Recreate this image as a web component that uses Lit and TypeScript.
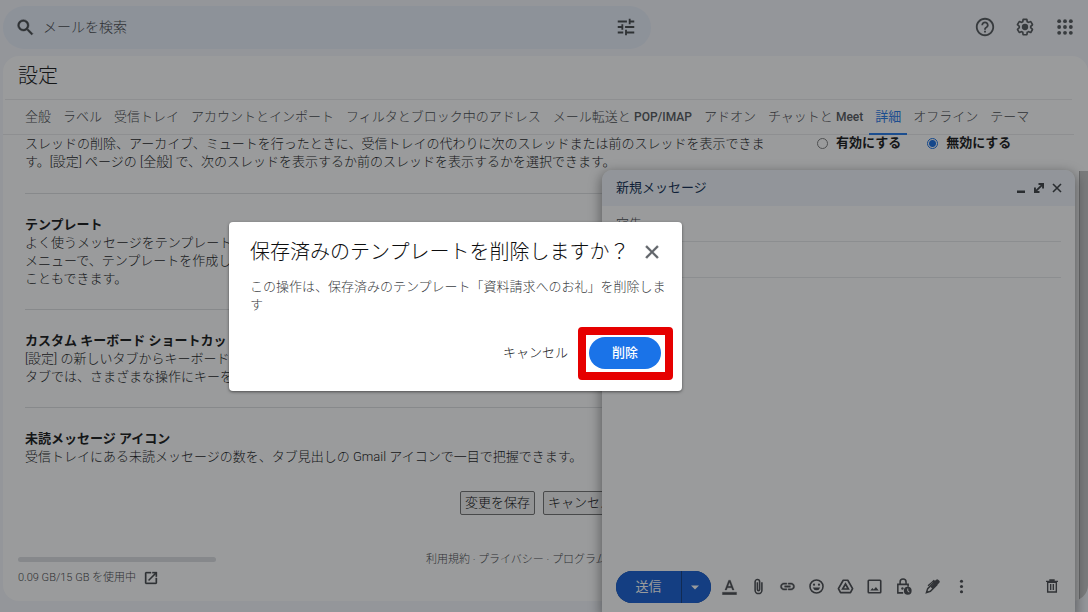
import { LitElement, html, css, svg } from "lit";
import { customElement, property } from "lit/decorators.js";
import { classMap } from "lit/directives/class-map.js";

const icons: Record<string, unknown> = {
  search: svg`<path d="M15.5 14h-.79l-.28-.27A6.471 6.471 0 0 0 16 9.5 6.5 6.5 0 1 0 9.5 16c1.61 0 3.09-.59 4.23-1.57l.27.28v.79l5 4.99L20.49 19l-4.99-5zm-6 0C7.01 14 5 11.99 5 9.5S7.01 5 9.5 5 14 7.01 14 9.5 11.99 14 9.5 14z" stroke="currentColor" stroke-width=".5"/>`,
  tune: svg`<path d="M3 17v2h6v-2H3zM3 5v2h10V5H3zm10 16v-2h8v-2h-8v-2h-2v6h2zM7 9v2H3v2h4v2h2V9H7zm14 4v-2H11v2h10zm-6-4h2V7h4V5h-4V3h-2v6z"/>`,
  help: svg`<path d="M11 18h2v-2h-2v2zm1-16C6.48 2 2 6.48 2 12s4.48 10 10 10 10-4.48 10-10S17.52 2 12 2zm0 18c-4.41 0-8-3.59-8-8s3.59-8 8-8 8 3.59 8 8-3.59 8-8 8zm0-14c-2.21 0-4 1.79-4 4h2c0-1.1.9-2 2-2s2 .9 2 2c0 2-3 1.75-3 5h2c0-2.25 3-2.5 3-5 0-2.21-1.79-4-4-4z"/>`,
  gear: svg`<path d="M13.85 22.25h-3.7c-.74 0-1.36-.54-1.45-1.27l-.27-1.89c-.27-.14-.53-.29-.79-.46l-1.8.72c-.7.26-1.47-.03-1.81-.65L2.2 15.53c-.35-.66-.2-1.44.36-1.88l1.53-1.19c-.01-.15-.02-.3-.02-.46 0-.15.01-.31.02-.46l-1.52-1.19c-.59-.45-.74-1.26-.37-1.88l1.85-3.19c.34-.62 1.11-.9 1.79-.63l1.81.73c.26-.17.52-.32.78-.46l.27-1.91c.09-.7.71-1.25 1.44-1.25h3.7c.74 0 1.36.54 1.45 1.27l.27 1.89c.27.14.53.29.79.46l1.8-.72c.71-.26 1.48.03 1.82.65l1.84 3.18c.36.66.2 1.44-.36 1.88l-1.52 1.19c.01.15.02.3.02.46s-.01.31-.02.46l1.52 1.19c.56.45.72 1.23.37 1.86l-1.86 3.22c-.34.62-1.11.9-1.8.63l-1.8-.72c-.26.17-.52.32-.78.46l-.27 1.91c-.1.68-.72 1.22-1.46 1.22zm-3.23-2h2.76l.37-2.55.53-.22c.44-.18.88-.44 1.34-.78l.45-.34 2.38.96 1.38-2.4-2.03-1.58.07-.56c.03-.26.06-.51.06-.78s-.03-.53-.06-.78l-.07-.56 2.03-1.58-1.39-2.4-2.39.96-.45-.35c-.42-.32-.87-.58-1.33-.77l-.52-.22-.37-2.55h-2.76l-.37 2.55-.53.21c-.44.19-.88.44-1.34.79l-.45.33-2.38-.95-1.39 2.39 2.03 1.58-.07.56a7 7 0 0 0-.06.79c0 .26.02.53.06.78l.07.56-2.03 1.58 1.38 2.4 2.39-.96.45.35c.43.33.86.58 1.33.77l.53.22.38 2.55z"/><circle cx="12" cy="12" r="3.8"/>`,
  apps: svg`${[5, 12, 19].map((y) => [5, 12, 19].map((x) => svg`<circle cx=${x} cy=${y} r="2.3"/>`))}`,
  minimize: svg`<path d="M4 17h16v5H4z"/>`,
  expand: svg`<path d="M11 2h11v11h-3.8V8.5L8.5 18.2H13V22H2V11h3.8v4.5L15.5 5.8H11z"/>`,
  close: svg`<path d="M19 6.41 17.59 5 12 10.59 6.41 5 5 6.41 10.59 12 5 17.59 6.41 19 12 13.41 17.59 19 19 17.59 13.41 12z" stroke="currentColor" stroke-width=".6"/>`,
  closeBold: svg`<path d="M4 4l16 16M20 4 4 20" fill="none" stroke="currentColor" stroke-width="3.2"/>`,
  open: svg`<path d="M19 19H5V5h7V3H5a2 2 0 0 0-2 2v14a2 2 0 0 0 2 2h14c1.1 0 2-.9 2-2v-7h-2v7zM14 3v2h3.59l-9.83 9.83 1.41 1.41L19 6.41V10h2V3h-7z" stroke="currentColor" stroke-width=".5"/>`,
  format: svg`<path d="M2 20h20v3.6H2zM5.5 17h2.4l1.2-3.2h5.8l1.2 3.2h2.4L13.2 3h-2.4L5.5 17zm4.4-5.2L12 6.1l2.1 5.7H9.9z" stroke="currentColor" stroke-width=".4"/>`,
  clip: svg`<path d="M16.8 6v11.2a4.8 4.8 0 0 1-9.6 0V5.4a3.2 3.2 0 0 1 6.4 0v10.8a1.6 1.6 0 0 1-3.2 0V6" fill="none" stroke="currentColor" stroke-width="2.2"/>`,
  link: svg`<path d="M3.9 12c0-1.71 1.39-3.1 3.1-3.1h4V7H7c-2.76 0-5 2.24-5 5s2.24 5 5 5h4v-1.9H7c-1.71 0-3.1-1.39-3.1-3.1zM8 13h8v-2H8v2zm9-6h-4v1.9h4c1.71 0 3.1 1.39 3.1 3.1s-1.39 3.1-3.1 3.1h-4V17h4c2.76 0 5-2.24 5-5s-2.24-5-5-5z" stroke="currentColor" stroke-width=".6"/>`,
  emoji: svg`<circle cx="12" cy="12" r="9.2" fill="none" stroke="currentColor" stroke-width="2.2"/><circle cx="8.5" cy="9.5" r="1.6"/><circle cx="15.5" cy="9.5" r="1.6"/><path d="M6.7 13.5h10.6a5.6 5.6 0 0 1-10.6 0z"/>`,
  drive: svg`<path d="M8.8 3.2h6.4L22 15l-3 5.6H5L2 15z" fill="none" stroke="currentColor" stroke-width="2.4" stroke-linejoin="round"/><path d="M12 8.5 16 15.5H8z" fill="none" stroke="currentColor" stroke-width="2.4"/>`,
  image: svg`<rect x="3.2" y="3.2" width="17.6" height="17.6" rx="1" fill="none" stroke="currentColor" stroke-width="2.3"/><path d="M6 17.8l3-3.6 2 2.2 3-3.6 4 5z"/>`,
  lock: svg`<path d="M11.5 21H4V9h14.5v3.5M7.2 9V5.7a4.2 4.2 0 0 1 8.4 0V9" fill="none" stroke="currentColor" stroke-width="2.2"/><circle cx="10.5" cy="14.8" r="1.7"/><path d="M18 12.5a5.5 5.5 0 1 0 0 11 5.5 5.5 0 0 0 0-11zm-.7 2.4h1.4v2.8l2 1.9-1 1-2.4-2.3z" fill-rule="evenodd"/>`,
  pen: svg`<path d="M3.5 20.5 5.2 15 14 6.2l3.8 3.8L9 18.8z" fill="none" stroke="currentColor" stroke-width="2.1"/><path d="M10.5 5.8 13.7 2.6l1.8 1.4L17.2 2.3a2 2 0 0 1 2.8 0L21.7 4a2 2 0 0 1 0 2.8L12.6 16 9 12.4 14 7.6 12.3 6 6.5 11.8 5 10.3z"/>`,
  more: svg`<circle cx="12" cy="4.5" r="2.2"/><circle cx="12" cy="12" r="2.2"/><circle cx="12" cy="19.5" r="2.2"/>`,
  trash: svg`<path d="M5.5 6.5h13V21h-13zM3 5h18M9 5V3h6v2M10 9v9M14 9v9" fill="none" stroke="currentColor" stroke-width="2.1"/>`,
  caret: svg`<path d="M4 9h16l-8 8z"/>`,
};

@customElement("mail-icon")
class MailIcon extends LitElement {
  @property() name = "";
  @property({ type: Number }) size = 18;

  static styles = css`
    :host {
      display: inline-flex;
      flex: none;
    }
    .glyph {
      display: block;
      fill: currentColor;
    }
  `;

  render() {
    return html`<svg class="glyph" width=${this.size} height=${this.size} viewBox="0 0 24 24" aria-hidden="true">
      ${icons[this.name]}
    </svg>`;
  }
}

@customElement("app-root")
class AppRoot extends LitElement {
  private tabs = [
    ["全般"],
    ["ラベル"],
    ["受信トレイ"],
    ["アカウントとインポート"],
    ["フィルタとブロック中のアドレス"],
    ["メール転送と ", "POP/IMAP"],
    ["アドオン"],
    ["チャットと ", "Meet"],
    ["詳細"],
    ["オフライン"],
    ["テーマ"],
  ];

  private tools = [
    ["format", "書式設定オプション"],
    ["clip", "ファイルを添付"],
    ["link", "リンクを挿入"],
    ["emoji", "絵文字を挿入"],
    ["drive", "ドライブを使用してファイルを挿入"],
    ["image", "写真を挿入"],
    ["lock", "情報保護モードを切り替え"],
    ["pen", "署名を挿入"],
    ["more", "その他のオプション"],
  ];

  static styles = css`
    :host {
      display: flex;
      flex-direction: column;
      position: relative;
      box-sizing: border-box;
      height: 100vh;
      padding-bottom: 11px;
      overflow: hidden;
      background: #f4f6fb;
      color: #0c0d0e;
      font: 300 13px/18px Roboto, "Noto Sans CJK JP", sans-serif;
    }
    * {
      box-sizing: border-box;
    }
    button,
    input {
      font: inherit;
      color: inherit;
    }
    button {
      display: inline-flex;
      align-items: center;
      justify-content: center;
      padding: 0;
      border: 0;
      background: none;
      white-space: nowrap;
    }
    h1,
    h2,
    h3,
    p {
      margin: 0;
      font-weight: inherit;
    }

    .topbar {
      display: flex;
      justify-content: space-between;
      align-items: center;
      flex: none;
      height: 56px;
      padding: 0 3px 2px;
      color: #3c4043;
    }
    .search {
      display: flex;
      align-items: center;
      gap: 7px;
      width: 60%;
      max-width: 648px;
      height: 43px;
      padding: 0 14px 0 12px;
      border-radius: 22px;
      background: #e7eefa;
    }
    .search input {
      flex: 1;
      min-width: 0;
      padding: 0;
      border: 0;
      outline: 0;
      background: none;
      font-size: 14px;
    }
    .search input::placeholder {
      color: #3c4043;
      opacity: 1;
    }
    .apps {
      display: flex;
    }
    .apps button {
      width: 40px;
      height: 40px;
      color: #4c5054;
    }

    .panel {
      display: flex;
      flex-direction: column;
      flex: 1;
      min-height: 0;
      margin-left: 3px;
      border-radius: 16px;
      overflow: hidden;
      background: #fff;
    }
    .heading {
      flex: none;
      height: 44px;
      margin: 0 16px 0 2px;
      padding-left: 13px;
      border-bottom: 1px solid #e9eaeb;
      font-size: 20px;
      line-height: 40px;
    }
    .tabs {
      display: flex;
      flex: none;
      gap: 12px;
      height: 35px;
      margin-right: 14px;
      padding-left: 22px;
      border-bottom: 1px solid #e9eaeb;
    }
    .tab {
      display: block;
      flex: none;
      height: 35px;
      color: #3c4043;
      line-height: 34px;
      text-decoration: none;
      white-space: pre;
    }
    .latin {
      color: #4c5054;
      font-size: 12px;
      font-weight: 500;
    }
    .tab.active {
      margin: 0 -6px;
      padding: 0 6px;
      border-bottom: 2px solid #1a73e8;
      color: #1a73e8;
      font-weight: 400;
    }
    .scroller {
      display: flex;
      flex: 1;
      min-height: 0;
      overflow: hidden;
    }
    .content {
      flex: 1;
      min-width: 0;
    }
    .track {
      flex: none;
      width: 9px;
      padding-top: 36px;
    }
    .thumb {
      height: 100%;
      border-left: 1px solid #a4a4a4;
      background: #c4c4c4;
    }
    .row {
      display: flex;
      justify-content: space-between;
      margin: 0 16px 0 22px;
      padding: 22px 0 21px;
      border-bottom: 1px solid #dddfe1;
    }
    .row:first-child {
      padding: 0 0 22px;
    }
    .row.last {
      border-bottom: 0;
    }
    .row h3 {
      font-size: 13px;
      font-weight: 700;
    }
    .text {
      white-space: nowrap;
    }
    .choices {
      display: flex;
      gap: 26px;
      width: 246px;
      height: 16px;
      font-weight: 700;
    }
    .choice {
      display: flex;
      align-items: center;
      gap: 8px;
      white-space: nowrap;
    }
    .choice input {
      appearance: none;
      width: 11px;
      height: 11px;
      margin: 0;
      border: 1px solid #767676;
      border-radius: 50%;
    }
    .choice input:checked {
      border-color: #0b66e0;
      background: radial-gradient(circle, #0b66e0 3px, #fff 4px);
    }
    .actions {
      display: flex;
      gap: 8px;
      padding: 4px 0 0 457px;
    }
    .actions button {
      height: 24px;
      padding: 0 4px;
      border: 1px solid #6b6b6b;
      border-radius: 2px;
      background: #f1f1f1;
      color: #000;
    }
    .footer {
      display: flex;
      justify-content: flex-start;
      padding: 36px 0 0 15px;
      color: #3c4043;
      font-size: 11px;
    }
    .storage {
      width: 408px;
      padding-top: 6px;
    }
    .meter {
      width: 198px;
      height: 5px;
      border-radius: 3px;
      background: #dadce0;
    }
    .quota {
      display: flex;
      align-items: center;
      gap: 7px;
      margin-top: 7px;
    }
    .links {
      white-space: nowrap;
    }
    .links a,
    .quota a {
      display: inline-flex;
      color: inherit;
      text-decoration: none;
    }

    .compose {
      position: absolute;
      top: 170px;
      right: 13px;
      bottom: 0;
      display: flex;
      flex-direction: column;
      width: 473px;
      border-radius: 10px 10px 0 0;
      background: #fff;
      box-shadow: 0 4px 12px 2px rgba(0, 0, 0, 0.4);
    }
    .compose-head {
      display: flex;
      align-items: center;
      height: 36px;
      padding: 0 9px 1px 14px;
      border-radius: 10px 10px 0 0;
      background: #f0f5fc;
      color: #041e49;
    }
    .compose-head h2 {
      flex: 1;
      font-size: 13px;
      font-weight: 400;
    }
    .compose-head button {
      width: 18px;
      height: 18px;
      color: #33373b;
    }
    .field {
      height: 36px;
      margin: 0 14px;
      padding: 0;
      border: 0;
      border-bottom: 1px solid #e6e8ea;
      border-radius: 0;
      outline: 0;
      background: none;
    }
    .field::placeholder {
      color: #3c4043;
      opacity: 1;
    }
    .body {
      flex: 1;
      margin: 0 14px;
      border: 0;
      outline: 0;
      resize: none;
      background: none;
    }
    .toolbar {
      display: flex;
      align-items: center;
      padding: 0 9px 9px 14px;
      color: #404347;
    }
    .send {
      display: flex;
      gap: 1px;
      height: 32px;
      margin-right: 5px;
      border-radius: 16px;
      overflow: hidden;
      background: #06337c;
      color: #fff;
    }
    .send button {
      background: #0b57d0;
    }
    .send .main {
      width: 65px;
      font-weight: 400;
    }
    .send .menu {
      width: 29px;
      padding-right: 3px;
    }
    .tool {
      width: 29px;
      height: 28px;
      padding: 0 2px 2px 0;
    }
    .tool.discard {
      margin-left: auto;
      padding-right: 0;
    }

    .scrim {
      position: absolute;
      inset: 0;
      display: flex;
      align-items: center;
      justify-content: center;
      padding-right: 177px;
      background: rgba(32, 33, 36, 0.45);
    }
    .dialog {
      width: 453px;
      padding: 16px 9px 11px 21px;
      border-radius: 4px;
      background: #fff;
      box-shadow: 0 1px 3px rgba(0, 0, 0, 0.5);
    }
    .dialog-head {
      display: flex;
      align-items: center;
      justify-content: space-between;
      height: 28px;
      padding-right: 9px;
    }
    .dialog-head h2 {
      font-size: 20px;
      line-height: 30px;
      white-space: nowrap;
    }
    .dialog-head button {
      width: 24px;
      height: 24px;
      color: #5f6368;
    }
    .dialog p {
      margin-top: 12px;
      color: #3c4043;
      white-space: nowrap;
    }
    .dialog-foot {
      display: flex;
      align-items: center;
      justify-content: flex-end;
      gap: 10px;
      margin-top: 13px;
    }
    .cancel {
      color: #202124;
    }
    .frame {
      display: flex;
      padding: 2px 4px 3px 3px;
      border: 8px solid #e60000;
      border-radius: 4px;
    }
    .delete {
      width: 72px;
      height: 32px;
      border-radius: 16px;
      background: #1a73e8;
      color: #fff;
      font-weight: 500;
    }
  `;

  private iconButton(name: string, label: string, size: number, cls = "") {
    return html`<button class=${cls} aria-label=${label}><mail-icon name=${name} .size=${size}></mail-icon></button>`;
  }

  render() {
    return html`
      <header class="topbar">
        <div class="search">
          <mail-icon name="search" .size=${21}></mail-icon>
          <input type="text" placeholder="メールを検索" aria-label="メールを検索" />
          ${this.iconButton("tune", "検索オプションを表示", 22)}
        </div>
        <nav class="apps">
          ${this.iconButton("help", "サポート", 22)} ${this.iconButton("gear", "設定", 20)}
          ${this.iconButton("apps", "Google アプリ", 20)}
        </nav>
      </header>

      <main class="panel">
        <h1 class="heading">設定</h1>
        <nav class="tabs">
          ${this.tabs.map(
            ([name, latin]) =>
              html`<a href="#" class=${classMap({ tab: true, active: name === "詳細" })}>${name}${latin
                  ? html`<span class="latin">${latin}</span>`
                  : ""}</a>`,
          )}
        </nav>
        <div class="scroller">
          <div class="content">
            <section class="row">
              <p class="text">
                スレッドの削除、アーカイブ、ミュートを行ったときに、受信トレイの代わりに次のスレッドまたは前のスレッドを表示できま<br />す。[設定]
                ページの [全般] で、次のスレッドを表示するか前のスレッドを表示するかを選択できます。
              </p>
              <div class="choices">
                <label class="choice"><input type="radio" name="advance" />有効にする</label>
                <label class="choice"><input type="radio" name="advance" checked />無効にする</label>
              </div>
            </section>
            <section class="row">
              <div class="text">
                <h3>テンプレート</h3>
                <p>よく使うメッセージをテンプレートに<br />メニューで、テンプレートを作成した<br />こともできます。</p>
              </div>
            </section>
            <section class="row">
              <div class="text">
                <h3>カスタム キーボード ショートカット</h3>
                <p>[設定] の新しいタブからキーボード<br />タブでは、さまざまな操作にキーを再</p>
              </div>
            </section>
            <section class="row last">
              <div class="text">
                <h3>未読メッセージ アイコン</h3>
                <p>受信トレイにある未読メッセージの数を、タブ見出しの Gmail アイコンで一目で把握できます。</p>
              </div>
            </section>
            <div class="actions"><button>変更を保存</button><button>キャンセル</button></div>
            <footer class="footer">
              <div class="storage">
                <div class="meter"></div>
                <div class="quota">
                  <span>0.09 GB/15 GB を使用中</span>
                  <a href="#" aria-label="保存容量を管理"><mail-icon name="open" .size=${16}></mail-icon></a>
                </div>
              </div>
              <div class="links"><a href="#">利用規約</a> · <a href="#">プライバシー</a> · <a href="#">プログラム</a></div>
            </footer>
          </div>
          <div class="track"><div class="thumb"></div></div>
        </div>
      </main>

      <section class="compose" aria-label="新規メッセージ">
        <div class="compose-head">
          <h2>新規メッセージ</h2>
          ${this.iconButton("minimize", "最小化", 12)} ${this.iconButton("expand", "全画面表示", 12)}
          ${this.iconButton("closeBold", "閉じる", 12)}
        </div>
        <input class="field" type="text" placeholder="宛先" aria-label="宛先" />
        <input class="field" type="text" aria-label="件名" />
        <textarea class="body" aria-label="メッセージ本文"></textarea>
        <div class="toolbar">
          <div class="send">
            <button class="main">送信</button>
            ${this.iconButton("caret", "送信オプション", 12, "menu")}
          </div>
          ${this.tools.map(([name, label]) => this.iconButton(name, label, 17, "tool"))}
          ${this.iconButton("trash", "下書きを破棄", 16, "tool discard")}
        </div>
      </section>

      <div class="scrim">
        <div class="dialog" role="dialog" aria-modal="true" aria-labelledby="dialog-title">
          <div class="dialog-head">
            <h2 id="dialog-title">保存済みのテンプレートを削除しますか？</h2>
            ${this.iconButton("close", "閉じる", 22)}
          </div>
          <p>この操作は、保存済みのテンプレート「資料請求へのお礼」を削除しま<br />す</p>
          <div class="dialog-foot">
            <button class="cancel">キャンセル</button>
            <div class="frame"><button class="delete">削除</button></div>
          </div>
        </div>
      </div>
    `;
  }
}
